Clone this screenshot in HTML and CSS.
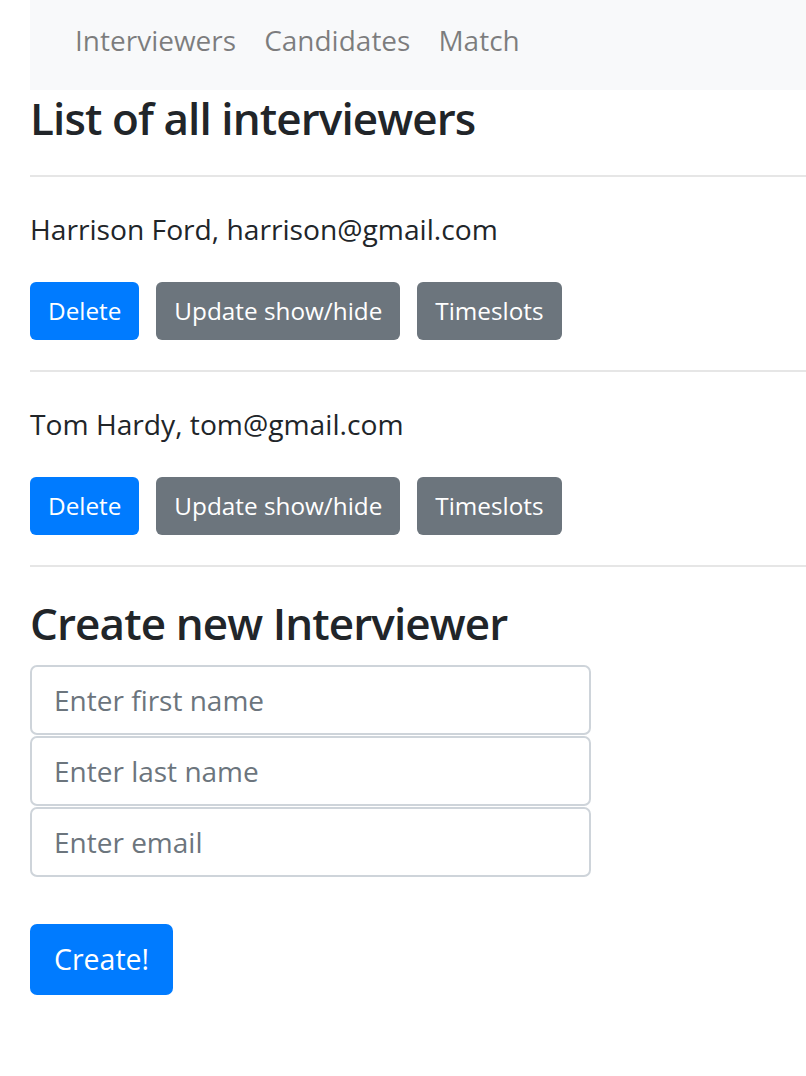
FILE: index.html
```html
<!DOCTYPE html>
<html lang="en">
<head>
<meta charset="utf-8">
<title>Interviewers</title>
<link rel="stylesheet" href="styles.css">
</head>
<body>
<div class="page">
  <nav class="navbar">
    <a class="nav-link" href="#">Interviewers</a>
    <a class="nav-link" href="#">Candidates</a>
    <a class="nav-link" href="#">Match</a>
  </nav>
  <h2 class="title">List of all interviewers</h2>
  <div class="item">
    <hr class="divider">
    <p class="person">Harrison Ford, harrison@gmail.com</p>
    <div class="actions">
      <button class="btn btn-primary">Delete</button>
      <button class="btn btn-secondary">Update show/hide</button>
      <button class="btn btn-secondary">Timeslots</button>
    </div>
  </div>
  <div class="item">
    <hr class="divider">
    <p class="person">Tom Hardy, tom@gmail.com</p>
    <div class="actions">
      <button class="btn btn-primary">Delete</button>
      <button class="btn btn-secondary">Update show/hide</button>
      <button class="btn btn-secondary">Timeslots</button>
    </div>
  </div>
  <hr class="divider">
  <h2 class="title create-title">Create new Interviewer</h2>
  <form class="create-form">
    <input class="form-control" type="text" placeholder="Enter first name">
    <input class="form-control" type="text" placeholder="Enter last name">
    <input class="form-control" type="email" placeholder="Enter email">
    <button class="btn-lg" type="button">Create!</button>
  </form>
</div>
</body>
</html>
```
FILE: styles.css
```css
body {
  margin: 0;
  font-family: "Open Sans", "Noto Sans", sans-serif;
  color: #212529;
  background: #fff;
  overflow-x: hidden;
}

.page {
  margin-left: 30px;
}

.navbar {
  height: 90px;
  box-sizing: border-box;
  background: #f8f9fa;
  display: flex;
  align-items: flex-start;
  gap: 28px;
  padding: 18px 0 0 45px;
}

.nav-link {
  font-size: 28px;
  line-height: 45px;
  color: rgba(0, 0, 0, 0.5);
  text-decoration: none;
}

.title {
  font-size: 44px;
  line-height: 57.6px;
  font-weight: 600;
  letter-spacing: -0.9px;
  margin: 0 0 27px;
}

.divider {
  height: 2px;
  border: 0;
  margin: 0;
  background: #e6e6e6;
}

.item {
  padding-bottom: 30px;
}

.person {
  font-size: 28.2px;
  line-height: 45px;
  margin: 30px 0 30px;
}

.actions {
  display: flex;
  gap: 17px;
}

.btn {
  font-family: inherit;
  font-size: 24.3px;
  line-height: 36px;
  height: 58px;
  padding: 0 18px;
  border: 0;
  border-radius: 6px;
  color: #fff;
}

.btn-primary {
  background: #007bff;
}

.btn-secondary {
  background: #6c757d;
}

.create-title {
  margin: 28px 0 13px;
}

.create-form {
  display: flex;
  flex-direction: column;
  align-items: flex-start;
}

.form-control {
  width: 561px;
  height: 70px;
  box-sizing: border-box;
  margin: 0 0 1px;
  padding: 0 22px;
  border: 2px solid #ced4da;
  border-radius: 7px;
  font-family: inherit;
  font-size: 28px;
  color: #495057;
  background: #fff;
}

.form-control::placeholder {
  color: #6c757d;
  opacity: 1;
}

.btn-lg {
  margin-top: 46px;
  height: 71px;
  padding: 0 24px;
  border: 0;
  border-radius: 7px;
  background: #007bff;
  color: #fff;
  font-family: inherit;
  font-size: 28.5px;
  line-height: 45px;
}
```
